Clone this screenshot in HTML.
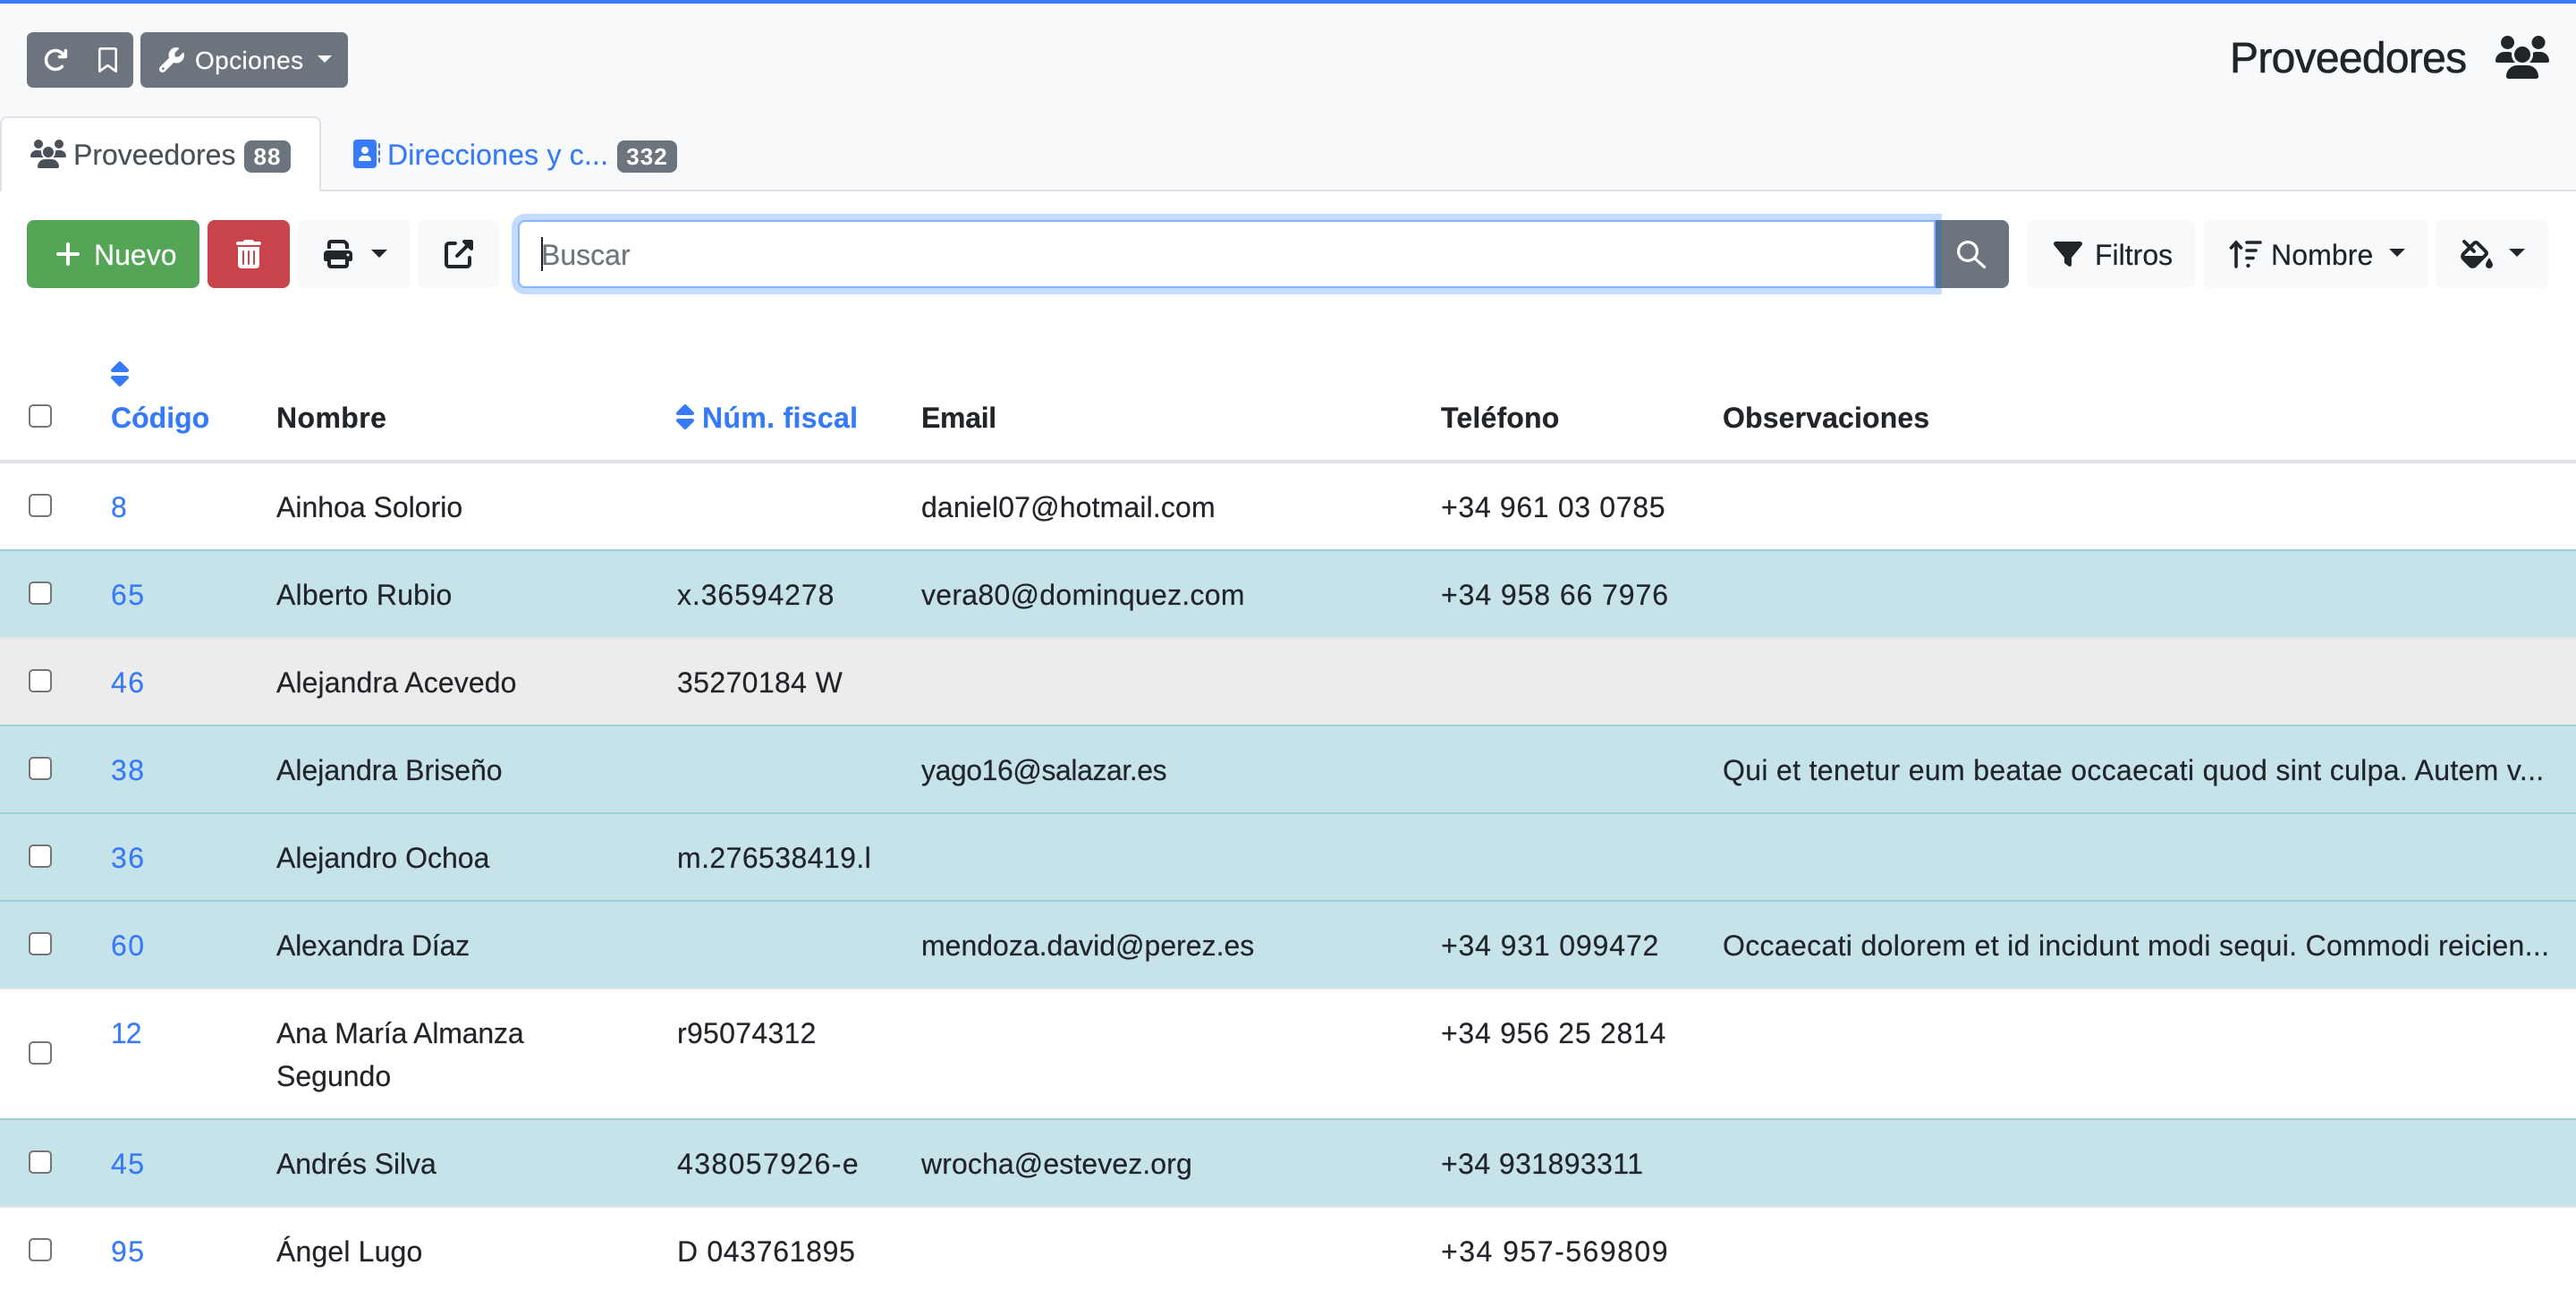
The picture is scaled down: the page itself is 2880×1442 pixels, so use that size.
<!DOCTYPE html>
<html lang="es"><head><meta charset="utf-8"><title>Proveedores</title>
<style>
html,body{margin:0;padding:0;width:2880px;height:1442px;overflow:hidden;background:#fff;font-family:"Liberation Sans",sans-serif;color:#212529}
div,span,svg{position:absolute;box-sizing:border-box}
.t{font-size:32px;line-height:48px;white-space:nowrap;color:#212529;-webkit-text-stroke:.2px currentColor}
.a{color:#377af8}
.c{letter-spacing:1.5px}
.b{font-weight:700}
.sm{font-size:28px;line-height:42px;color:#fff}
.btn{top:246px;height:76px;border-radius:8px;background:#f8f9fa}
.badge{top:157px;height:36px;background:#6c757d;border-radius:8px;color:#fff;font-weight:700;font-size:26px;line-height:37px;text-align:center;letter-spacing:1px}
.car{width:0;height:0;border-left:9px solid transparent;border-right:9px solid transparent;border-top:9.5px solid #212529}
.cb{left:32px;width:26px;height:26px;background:#fff;border:2px solid #767676;border-radius:5px}
.row{left:0;width:2880px}
svg{fill:currentColor;overflow:visible}
</style></head><body>
<div style="left:0;top:0;width:2880px;height:214px;background:#f8f9fa"></div>
<div style="left:0;top:0;width:2880px;height:4px;background:#377cfc"></div>
<div style="left:0;top:212px;width:2880px;height:2px;background:#dee2e6"></div>

<!-- top buttons -->
<div style="left:30px;top:36px;width:119px;height:62px;border-radius:7px;background:#6c757d"></div>
<svg style="left:48px;top:53px;color:#fff" width="28" height="28" viewBox="0 0 512 512"><path d="M386.3 160H336c-17.7 0-32 14.3-32 32s14.3 32 32 32H464c17.7 0 32-14.3 32-32V64c0-17.7-14.3-32-32-32s-32 14.3-32 32v51.2L414.4 97.6c-87.5-87.5-229.3-87.5-316.8 0s-87.5 229.3 0 316.8s229.3 87.5 316.8 0c12.5-12.5 12.5-32.8 0-45.3s-32.8-12.5-45.3 0c-62.5 62.5-163.8 62.5-226.3 0s-62.5-163.8 0-226.3s163.8-62.5 226.3 0L386.3 160z"/></svg>
<svg style="left:110px;top:53px;color:#fff" width="21" height="28" viewBox="0 0 384 512"><path d="M0 48C0 21.5 21.5 0 48 0l0 48V441.4l130.1-92.9c8.3-6 19.6-6 27.9 0L336 441.4V48H48V0H336c26.5 0 48 21.5 48 48V488c0 9-5 17.2-13 21.3s-17.6 3.4-24.9-1.8L192 397.5 37.9 507.5c-7.3 5.2-16.9 5.9-24.9 1.8S0 497 0 488V48z"/></svg>
<div style="left:157px;top:36px;width:232px;height:62px;border-radius:7px;background:#6c757d"></div>
<svg style="left:178px;top:53px;color:#fff" width="28" height="28" viewBox="0 0 512 512"><path d="M352 320c88.4 0 160-71.6 160-160c0-15.3-2.2-30.1-6.2-44.2c-3.1-10.8-16.4-13.2-24.3-5.3l-76.8 76.8c-3 3-7.1 4.7-11.3 4.7H336c-8.8 0-16-7.2-16-16V118.6c0-4.2 1.7-8.3 4.7-11.3l76.8-76.8c7.9-7.9 5.4-21.2-5.3-24.3C382.1 2.2 367.3 0 352 0C263.6 0 192 71.6 192 160c0 19.1 3.4 37.5 9.5 54.5L19.9 396.1C7.2 408.8 0 426.1 0 444.1C0 481.6 30.4 512 67.9 512c18 0 35.3-7.2 48-19.9L297.5 310.5c17 6.2 35.4 9.5 54.5 9.5zM80 408a24 24 0 1 1 0 48 24 24 0 1 1 0-48z"/></svg>
<span class="t sm" style="left:218px;top:47px;letter-spacing:.4px">Opciones</span>
<div class="car" style="left:355px;top:62px;border-left-width:8.4px;border-right-width:8.4px;border-top:8.4px solid #fff"></div>

<span class="t" style="left:2493px;top:30px;font-size:48px;line-height:72px;letter-spacing:-.7px;-webkit-text-stroke:.6px #212529">Proveedores</span>
<svg style="left:2790px;top:40px" width="60" height="48" viewBox="0 0 640 512"><path d="M144 0a80 80 0 1 1 0 160A80 80 0 1 1 144 0zM512 0a80 80 0 1 1 0 160A80 80 0 1 1 512 0zM0 298.7C0 239.8 47.8 192 106.7 192h42.7c15.9 0 31 3.5 44.6 9.7c-1.3 7.2-1.9 14.7-1.9 22.3c0 38.2 16.8 72.5 43.3 96c-.2 0-.4 0-.7 0H21.3C9.6 320 0 310.4 0 298.7zM405.3 320c-.2 0-.4 0-.7 0c26.6-23.5 43.3-57.8 43.3-96c0-7.6-.7-15-1.9-22.3c13.6-6.3 28.7-9.7 44.6-9.7h42.7C592.2 192 640 239.8 640 298.7c0 11.8-9.6 21.3-21.3 21.3H405.3zM224 224a96 96 0 1 1 192 0 96 96 0 1 1 -192 0zM128 485.3C128 411.7 187.7 352 261.3 352H378.7C452.3 352 512 411.7 512 485.3c0 14.7-11.9 26.7-26.7 26.7H154.7c-14.7 0-26.7-11.9-26.7-26.7z"/></svg>

<!-- tabs -->
<div style="left:0;top:130px;width:359px;height:84px;background:#fff;border:2px solid #dee2e6;border-bottom:0;border-radius:8px 8px 0 0"></div>
<svg style="left:34px;top:156px;color:#495057" width="40" height="32" viewBox="0 0 640 512"><path d="M144 0a80 80 0 1 1 0 160A80 80 0 1 1 144 0zM512 0a80 80 0 1 1 0 160A80 80 0 1 1 512 0zM0 298.7C0 239.8 47.8 192 106.7 192h42.7c15.9 0 31 3.5 44.6 9.7c-1.3 7.2-1.9 14.7-1.9 22.3c0 38.2 16.8 72.5 43.3 96c-.2 0-.4 0-.7 0H21.3C9.6 320 0 310.4 0 298.7zM405.3 320c-.2 0-.4 0-.7 0c26.6-23.5 43.3-57.8 43.3-96c0-7.6-.7-15-1.9-22.3c13.6-6.3 28.7-9.7 44.6-9.7h42.7C592.2 192 640 239.8 640 298.7c0 11.8-9.6 21.3-21.3 21.3H405.3zM224 224a96 96 0 1 1 192 0 96 96 0 1 1 -192 0zM128 485.3C128 411.7 187.7 352 261.3 352H378.7C452.3 352 512 411.7 512 485.3c0 14.7-11.9 26.7-26.7 26.7H154.7c-14.7 0-26.7-11.9-26.7-26.7z"/></svg>
<span class="t" style="left:82px;top:149px;color:#495057">Proveedores</span>
<div class="badge" style="left:273px;width:52px">88</div>
<svg class="a" style="left:393px;top:156px" width="32" height="32" viewBox="0 0 512 512"><path d="M96 0C60.7 0 32 28.7 32 64V448c0 35.3 28.7 64 64 64H384c35.3 0 64-28.7 64-64V64c0-35.3-28.7-64-64-64H96zM208 288h64c44.2 0 80 35.8 80 80c0 8.8-7.2 16-16 16H144c-8.8 0-16-7.2-16-16c0-44.2 35.8-80 80-80zm-32-96a64 64 0 1 1 128 0 64 64 0 1 1 -128 0zM512 80c0-8.8-7.2-16-16-16s-16 7.2-16 16v64c0 8.8 7.2 16 16 16s16-7.2 16-16V80zM496 192c-8.8 0-16 7.2-16 16v64c0 8.8 7.2 16 16 16s16-7.2 16-16V208c0-8.8-7.2-16-16-16zm16 144c0-8.8-7.2-16-16-16s-16 7.2-16 16v64c0 8.8 7.2 16 16 16s16-7.2 16-16V336z"/></svg>
<span class="t a" style="left:433px;top:149px;letter-spacing:.2px">Direcciones y c...</span>
<div class="badge" style="left:690px;width:67px">332</div>

<!-- toolbar -->
<div class="btn" style="left:30px;width:193px;background:#54a555"></div>
<svg style="left:63px;top:271px" width="26" height="26" viewBox="0 0 26 26"><path d="M13 2v22M2 13h22" stroke="#fff" stroke-width="4" stroke-linecap="round" fill="none"/></svg>
<span class="t" style="left:105px;top:261px;color:#fff">Nuevo</span>
<div class="btn" style="left:232px;width:92px;background:#c9434b"></div>
<svg style="left:264px;top:268px;color:#fff" width="28" height="32" viewBox="0 0 448 512"><path d="M135.2 17.7C140.6 6.8 151.7 0 163.8 0H284.2c12.1 0 23.2 6.8 28.6 17.7L320 32h96c17.7 0 32 14.3 32 32s-14.3 32-32 32H32C14.3 96 0 81.7 0 64S14.3 32 32 32h96l7.2-14.3zM32 128H416V448c0 35.3-28.7 64-64 64H96c-35.3 0-64-28.7-64-64V128zm96 64c-8.8 0-16 7.2-16 16V432c0 8.8 7.2 16 16 16s16-7.2 16-16V208c0-8.8-7.2-16-16-16zm96 0c-8.8 0-16 7.2-16 16V432c0 8.8 7.2 16 16 16s16-7.2 16-16V208c0-8.8-7.2-16-16-16zm96 0c-8.8 0-16 7.2-16 16V432c0 8.8 7.2 16 16 16s16-7.2 16-16V208c0-8.8-7.2-16-16-16z"/></svg>
<div class="btn" style="left:332px;width:127px"></div>
<svg style="left:362px;top:268px" width="32" height="32" viewBox="0 0 512 512"><path d="M128 0C92.7 0 64 28.7 64 64v96h64V64H354.7L384 93.3V160h64V93.3c0-17-6.7-33.3-18.7-45.3L400 18.7C388 6.7 371.7 0 354.7 0H128zM384 352v32 64H128V384 368 352H384zm64 32h32c17.7 0 32-14.3 32-32V256c0-35.3-28.7-64-64-64H64c-35.3 0-64 28.7-64 64v96c0 17.7 14.3 32 32 32H64v64c0 35.3 28.7 64 64 64H384c35.3 0 64-28.7 64-64V384zM432 248a24 24 0 1 1 0 48 24 24 0 1 1 0-48z"/></svg>
<div class="car" style="left:415px;top:279px"></div>
<div class="btn" style="left:467px;width:92px"></div>
<svg style="left:497px;top:268px" width="32" height="32" viewBox="0 0 512 512"><path d="M352 0c-12.9 0-24.6 7.8-29.6 19.8s-2.2 25.7 6.9 34.9L370.7 96 201.4 265.4c-12.5 12.5-12.5 32.8 0 45.3s32.8 12.5 45.3 0L416 141.3l41.4 41.4c9.2 9.2 22.9 11.9 34.9 6.9s19.8-16.6 19.8-29.6V32c0-17.7-14.3-32-32-32H352zM80 32C35.8 32 0 67.8 0 112V432c0 44.2 35.8 80 80 80H400c44.2 0 80-35.8 80-80V320c0-17.7-14.3-32-32-32s-32 14.3-32 32V432c0 8.8-7.2 16-16 16H80c-8.8 0-16-7.2-16-16V112c0-8.8 7.2-16 16-16H192c17.7 0 32-14.3 32-32s-14.3-32-32-32H80z"/></svg>

<!-- search -->
<div class="btn" style="left:2164px;width:82px;background:#6c757d;border-radius:0 8px 8px 0"></div>
<svg style="left:2186px;top:267px" width="36" height="34" viewBox="0 0 36 34"><circle cx="14" cy="14" r="10.400" fill="none" stroke="#fff" stroke-width="3.200"/><path d="M21.500 21.500l11 10" stroke="#fff" stroke-width="3.200" stroke-linecap="round" fill="none"/></svg>
<div style="left:579px;top:246px;width:1585px;height:76px;background:#fff;border:2px solid #86b7fe;border-radius:8px 0 0 8px;box-shadow:0 0 0 7px rgba(13,110,253,.25)"></div>
<span class="t" style="left:605px;top:261px;color:#6c757d">Buscar</span>
<div style="left:605px;top:265px;width:2px;height:38px;background:#212529"></div>

<div class="btn" style="left:2266px;width:189px"></div>
<svg style="left:2296px;top:268px" width="32" height="32" viewBox="0 0 512 512"><path d="M3.9 54.9C10.5 40.9 24.5 32 40 32H472c15.5 0 29.5 8.9 36.1 22.9s4.6 30.5-5.2 42.5L320 320.9V448c0 12.1-6.8 23.2-17.7 28.6s-23.8 4.3-33.5-3l-64-48c-8.1-6-12.8-15.5-12.8-25.600V320.9L9 97.3C-.7 85.4-2.8 68.8 3.9 54.9z"/></svg>
<span class="t" style="left:2342px;top:261px">Filtros</span>
<div class="btn" style="left:2464px;width:251px"></div>
<svg style="left:2492px;top:268px" width="38" height="32" viewBox="0 0 38 32"><g stroke="#212529" stroke-linecap="round" fill="none" stroke-width="3.600"><path d="M8 3v27M2.500 9L8 3l5.500 6"/><path d="M20 3h15M20 12h10M20 20.500h7"/></g><circle cx="21.500" cy="29" r="2.200" fill="#212529"/></svg>
<span class="t" style="left:2539px;top:261px;letter-spacing:.1px">Nombre</span>
<div class="car" style="left:2671px;top:278px"></div>
<div class="btn" style="left:2723px;width:126px"></div>
<svg style="left:2751px;top:268px" width="36" height="32" viewBox="0 0 576 512"><path d="M86.600 9.400C74.100-3.100 53.900-3.100 41.400 9.400s-12.500 32.800 0 45.300L122.700 136 30.600 228.100c-37.500 37.500-37.500 98.300 0 135.800L148.100 481.400c37.500 37.500 98.300 37.500 135.800 0L474.300 290.900c28.100-28.100 28.100-73.700 0-101.800L322.900 37.700c-28.100-28.100-73.700-28.100-101.800 0L168 90.700 86.600 9.400zM168 181.300l49.400 49.400c12.500 12.500 32.800 12.500 45.300 0s12.500-32.800 0-45.300L213.300 136l53.100-53.100c3.100-3.100 8.200-3.100 11.300 0L429.100 234.300c3.100 3.100 3.100 8.200 0 11.300L386.700 288H67.500c1.400-5.400 4.200-10.400 8.400-14.600L168 181.300zM512 512c-35.300 0-64-28.700-64-64 0-25.200 32.600-79.600 51.200-108.800 6-9.300 19.500-9.300 25.500 0C543.400 368.400 576 422.800 576 448c0 35.300-28.700 64-64 64z"/></svg>
<div class="car" style="left:2805px;top:278px"></div>

<!-- table header -->
<div class="row" style="top:514px;height:4px;background:#dee2e6"></div>
<div class="cb" style="top:452px"></div>
<svg class="a" style="left:124px;top:402px" width="20" height="32" viewBox="0 0 320 512"><path d="M137.400 41.400c12.500-12.500 32.800-12.500 45.300 0l128 128c9.200 9.200 11.900 22.900 6.900 34.900s-16.600 19.800-29.600 19.800H32c-12.900 0-24.600-7.800-29.600-19.800s-2.200-25.700 6.900-34.900l128-128zm0 429.300l-128-128c-9.200-9.200-11.900-22.900-6.900-34.900s16.600-19.800 29.600-19.800H288c12.900 0 24.600 7.800 29.600 19.800s2.200 25.700-6.900 34.900l-128 128c-12.500 12.500-32.800 12.500-45.300 0z"/></svg>
<span class="t a b" style="left:124px;top:443px">Código</span>
<span class="t b" style="left:309px;top:443px;letter-spacing:.4px">Nombre</span>
<svg class="a" style="left:756px;top:450px" width="20" height="32" viewBox="0 0 320 512"><path d="M137.400 41.400c12.500-12.500 32.800-12.500 45.300 0l128 128c9.200 9.200 11.900 22.900 6.900 34.900s-16.600 19.800-29.600 19.800H32c-12.900 0-24.600-7.800-29.600-19.800s-2.200-25.700 6.900-34.900l128-128zm0 429.300l-128-128c-9.200-9.200-11.900-22.900-6.900-34.900s16.600-19.800 29.600-19.800H288c12.900 0 24.600 7.800 29.600 19.800s2.200 25.700-6.900 34.900l-128 128c-12.500 12.500-32.800 12.500-45.300 0z"/></svg>
<span class="t a b" style="left:785px;top:443px;letter-spacing:.33px">Núm. fiscal</span>
<span class="t b" style="left:1030px;top:443px;letter-spacing:-.3px">Email</span>
<span class="t b" style="left:1611px;top:443px;letter-spacing:.2px">Teléfono</span>
<span class="t b" style="left:1926px;top:443px;letter-spacing:.14px">Observaciones</span>

<!-- row backgrounds -->
<div class="row" style="top:616px;height:96px;background:#c6e3ea"></div>
<div class="row" style="top:614px;height:2px;background:#9acfdc"></div>
<div class="row" style="top:712px;height:2px;background:#dfe6e9"></div>
<div class="row" style="top:714px;height:96px;background:#ececec"></div>
<div class="row" style="top:810px;height:2px;background:#9acfdc"></div>
<div class="row" style="top:812px;height:96px;background:#c6e3ea"></div>
<div class="row" style="top:908px;height:2px;background:#9acfdc"></div>
<div class="row" style="top:910px;height:96px;background:#c6e3ea"></div>
<div class="row" style="top:1006px;height:2px;background:#9acfdc"></div>
<div class="row" style="top:1008px;height:96px;background:#c6e3ea"></div>
<div class="row" style="top:1104px;height:2px;background:#e0e3e8"></div>
<div class="row" style="top:1250px;height:2px;background:#9acfdc"></div>
<div class="row" style="top:1252px;height:96px;background:#c6e3ea"></div>
<div class="row" style="top:1348px;height:2px;background:#e0e3e8"></div>

<!-- rows -->
<div class="cb" style="top:552px"></div>
<span class="t a" style="left:124px;top:543px">8</span><span class="t" style="left:309px;top:543px">Ainhoa Solorio</span><span class="t" style="left:1030px;top:543px;letter-spacing:.14px">daniel07@hotmail.com</span><span class="t" style="left:1611px;top:543px;letter-spacing:.67px">+34 961 03 0785</span>

<div class="cb" style="top:650px"></div>
<span class="t a c" style="left:124px;top:641px">65</span><span class="t" style="left:309px;top:641px;letter-spacing:.2px">Alberto Rubio</span><span class="t" style="left:757px;top:641px;letter-spacing:.9px">x.36594278</span><span class="t" style="left:1030px;top:641px;letter-spacing:.28px">vera80@dominquez.com</span><span class="t" style="left:1611px;top:641px;letter-spacing:.92px">+34 958 66 7976</span>

<div class="cb" style="top:748px"></div>
<span class="t a c" style="left:124px;top:739px">46</span><span class="t" style="left:309px;top:739px;letter-spacing:.1px">Alejandra Acevedo</span><span class="t" style="left:757px;top:739px;letter-spacing:.37px">35270184 W</span>

<div class="cb" style="top:846px"></div>
<span class="t a c" style="left:124px;top:837px">38</span><span class="t" style="left:309px;top:837px">Alejandra Briseño</span><span class="t" style="left:1030px;top:837px;letter-spacing:-.43px">yago16@salazar.es</span><span class="t" style="left:1926px;top:837px;letter-spacing:.33px">Qui et tenetur eum beatae occaecati quod sint culpa. Autem v...</span>

<div class="cb" style="top:944px"></div>
<span class="t a c" style="left:124px;top:935px">36</span><span class="t" style="left:309px;top:935px">Alejandro Ochoa</span><span class="t" style="left:757px;top:935px;letter-spacing:.42px">m.276538419.l</span>

<div class="cb" style="top:1042px"></div>
<span class="t a c" style="left:124px;top:1033px">60</span><span class="t" style="left:309px;top:1033px;letter-spacing:-.2px">Alexandra Díaz</span><span class="t" style="left:1030px;top:1033px">mendoza.david@perez.es</span><span class="t" style="left:1611px;top:1033px;letter-spacing:.85px">+34 931 099472</span><span class="t" style="left:1926px;top:1033px;letter-spacing:.33px">Occaecati dolorem et id incidunt modi sequi. Commodi reicien...</span>

<div class="cb" style="top:1164px"></div>
<span class="t a" style="left:124px;top:1131px;letter-spacing:-1px">12</span><span class="t" style="left:309px;top:1131px;letter-spacing:-.16px">Ana María Almanza</span><span class="t" style="left:309px;top:1179px">Segundo</span><span class="t" style="left:757px;top:1131px;letter-spacing:.3px">r95074312</span><span class="t" style="left:1611px;top:1131px;letter-spacing:.73px">+34 956 25 2814</span>

<div class="cb" style="top:1286px"></div>
<span class="t a c" style="left:124px;top:1277px">45</span><span class="t" style="left:309px;top:1277px;letter-spacing:-.08px">Andrés Silva</span><span class="t" style="left:757px;top:1277px;letter-spacing:1.4px">438057926-e</span><span class="t" style="left:1030px;top:1277px;letter-spacing:.1px">wrocha@estevez.org</span><span class="t" style="left:1611px;top:1277px;letter-spacing:.42px">+34 931893311</span>

<div class="cb" style="top:1384px"></div>
<span class="t a c" style="left:124px;top:1375px">95</span><span class="t" style="left:309px;top:1375px;letter-spacing:.15px">Ángel Lugo</span><span class="t" style="left:757px;top:1375px;letter-spacing:.67px">D 043761895</span><span class="t" style="left:1611px;top:1375px;letter-spacing:1.5px">+34 957-569809</span>
</body></html>
